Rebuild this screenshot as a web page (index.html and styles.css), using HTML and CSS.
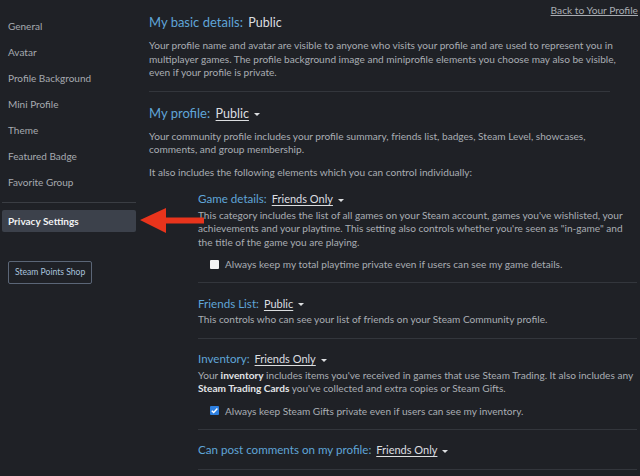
FILE: index.html
```html
<!DOCTYPE html>
<html>
<head>
<meta charset="utf-8">
<link rel="stylesheet" href="styles.css">
</head>
<body>
<div class="page">
  <nav class="sidebar">
    <a class="nav-item">General</a>
    <a class="nav-item">Avatar</a>
    <a class="nav-item">Profile Background</a>
    <a class="nav-item">Mini Profile</a>
    <a class="nav-item">Theme</a>
    <a class="nav-item">Featured Badge</a>
    <a class="nav-item">Favorite Group</a>
    <div class="nav-sep"></div>
    <a class="nav-item active">Privacy Settings</a>
    <div class="shop-wrap"><span class="shop-btn">Steam Points Shop</span></div>
  </nav>
  <main class="content">
    <div class="back-row"><a class="back-link">Back to Your Profile</a></div>

    <h2 class="sec-title">My basic details: <span class="val plain">Public</span></h2>
    <p class="txt">Your profile name and avatar are visible to anyone who visits your profile and are used to represent you in multiplayer games. The profile background image and miniprofile elements you choose may also be visible, even if your profile is private.</p>
    <div class="sep"></div>

    <h2 class="sec-title">My profile: <span class="val">Public</span><span class="caret"></span></h2>
    <p class="txt narrow">Your community profile includes your profile summary, friends list, badges, Steam Level, showcases, comments, and group membership.</p>
    <p class="txt gap">It also includes the following elements which you can control individually:</p>

    <div class="subs">
      <div class="sub">
        <h3 class="sub-title">Game details: <span class="val">Friends Only</span><span class="caret"></span></h3>
        <p class="txt">This category includes the list of all games on your Steam account, games you've wishlisted, your achievements and your playtime. This setting also controls whether you're seen as "in-game" and the title of the game you are playing.</p>
        <label class="check"><span class="box"></span>Always keep my total playtime private even if users can see my game details.</label>
      </div>
      <div class="sub">
        <h3 class="sub-title">Friends List: <span class="val">Public</span><span class="caret"></span></h3>
        <p class="txt">This controls who can see your list of friends on your Steam Community profile.</p>
      </div>
      <div class="sub">
        <h3 class="sub-title">Inventory: <span class="val">Friends Only</span><span class="caret"></span></h3>
        <p class="txt">Your <b>inventory</b> includes items you've received in games that use Steam Trading. It also includes any <b>Steam Trading Cards</b> you've collected and extra copies or Steam Gifts.</p>
        <label class="check"><span class="box on"><svg viewBox="0 0 10 10" width="9" height="9"><path d="M2 5.2 L4.1 7.3 L8.2 2.8" fill="none" stroke="#fff" stroke-width="1.6"/></svg></span>Always keep Steam Gifts private even if users can see my inventory.</label>
      </div>
      <div class="sub">
        <h3 class="sub-title">Can post comments on my profile: <span class="val">Friends Only</span><span class="caret"></span></h3>
      </div>
    </div>
  </main>
  <svg class="arrow" width="68" height="32" viewBox="0 0 68 32">
    <polygon points="2,15 28,3 28,12.5 66,12.5 66,18.5 28,18.5 28,28" fill="#e8341c"/>
  </svg>
</div>
</body>
</html>
```
FILE: styles.css
```css
html, body {
  margin: 0;
  padding: 0;
  background: #1f2126;
}
body {
  font-family: Lato, "Liberation Sans", sans-serif;
  color: #a9adb3;
  width: 640px;
  height: 476px;
  overflow: hidden;
}
.page {
  position: relative;
  display: flex;
  height: 476px;
}
.sidebar {
  width: 136px;
  flex: none;
  padding-top: 13px;
  display: flex;
  flex-direction: column;
}
.nav-item {
  display: block;
  height: 26px;
  line-height: 26px;
  margin-left: 2px;
  padding-left: 6px;
  font-size: 10px;
  color: #a6aab0;
}
.nav-sep {
  height: 1px;
  background: #3a3d43;
  margin: 7px 0 7px 2px;
}
.nav-item.active {
  height: 22px;
  line-height: 22px;
  background: #3c414b;
  color: #f1f2f3;
  font-weight: bold;
  border-radius: 2px;
}
.shop-wrap {
  margin-top: 27px;
  padding-left: 8px;
}
.shop-btn {
  display: inline-block;
  height: 21px;
  line-height: 21px;
  padding: 0 6px;
  border: 1px solid #5b6677;
  border-radius: 2px;
  font-size: 8.6px;
  color: #a9c2dd;
}
.content {
  flex: 1;
  padding-left: 13px;
  padding-right: 3px;
}
.back-row {
  height: 13px;
  text-align: right;
  line-height: 16px;
}
.back-link {
  font-size: 10.2px;
  color: #a9adb3;
  text-decoration: underline;
  margin-right: -1px;
}
.sec-title {
  margin: 0;
  font-weight: normal;
  font-size: 13px;
  line-height: 18px;
  color: #5fa5d8;
}
.sub-title {
  margin: 0;
  font-weight: normal;
  font-size: 11.6px;
  line-height: 16px;
  color: #5fa5d8;
}
.sec-title .val {
  font-size: 12.5px;
}
.sub-title .val {
  font-size: 11px;
}
.val {
  color: #dcdee0;
  text-decoration: underline;
  text-underline-offset: 2px;
  margin-left: 2px;
}
.val.plain {
  text-decoration: none;
}
.caret {
  display: inline-block;
  width: 0;
  height: 0;
  border-left: 3px solid transparent;
  border-right: 3px solid transparent;
  border-top: 3px solid #dcdee0;
  margin-left: 5px;
  vertical-align: middle;
}
.txt {
  margin: 7px 0 0;
  font-size: 10.1px;
  line-height: 13.5px;
}
.txt.narrow {
  max-width: 470px;
}
.txt.gap {
  margin-top: 9px;
}
.txt b {
  color: #e2e4e6;
  font-weight: bold;
}
.sep {
  height: 1px;
  background: #33363c;
  margin: 11px 27px 12px 0;
}
.subs {
  margin-left: 49px;
  margin-top: 12px;
}
.sub {
  border-bottom: 1px solid #33363c;
  padding-bottom: 11px;
  padding-top: 12.5px;
}
.sub:first-child {
  padding-top: 0;
}
.sub .txt {
  margin-top: 1.5px;
}
.check {
  display: flex;
  align-items: center;
  margin-top: 8px;
  margin-left: 12px;
  font-size: 10.1px;
  line-height: 14px;
}
.box {
  width: 9px;
  height: 9px;
  background: #f4f4f4;
  border-radius: 1px;
  margin-right: 6px;
  display: flex;
  align-items: center;
  justify-content: center;
}
.box.on {
  background: #2d7fe0;
}
.arrow {
  position: absolute;
  left: 138px;
  top: 205px;
}
```
